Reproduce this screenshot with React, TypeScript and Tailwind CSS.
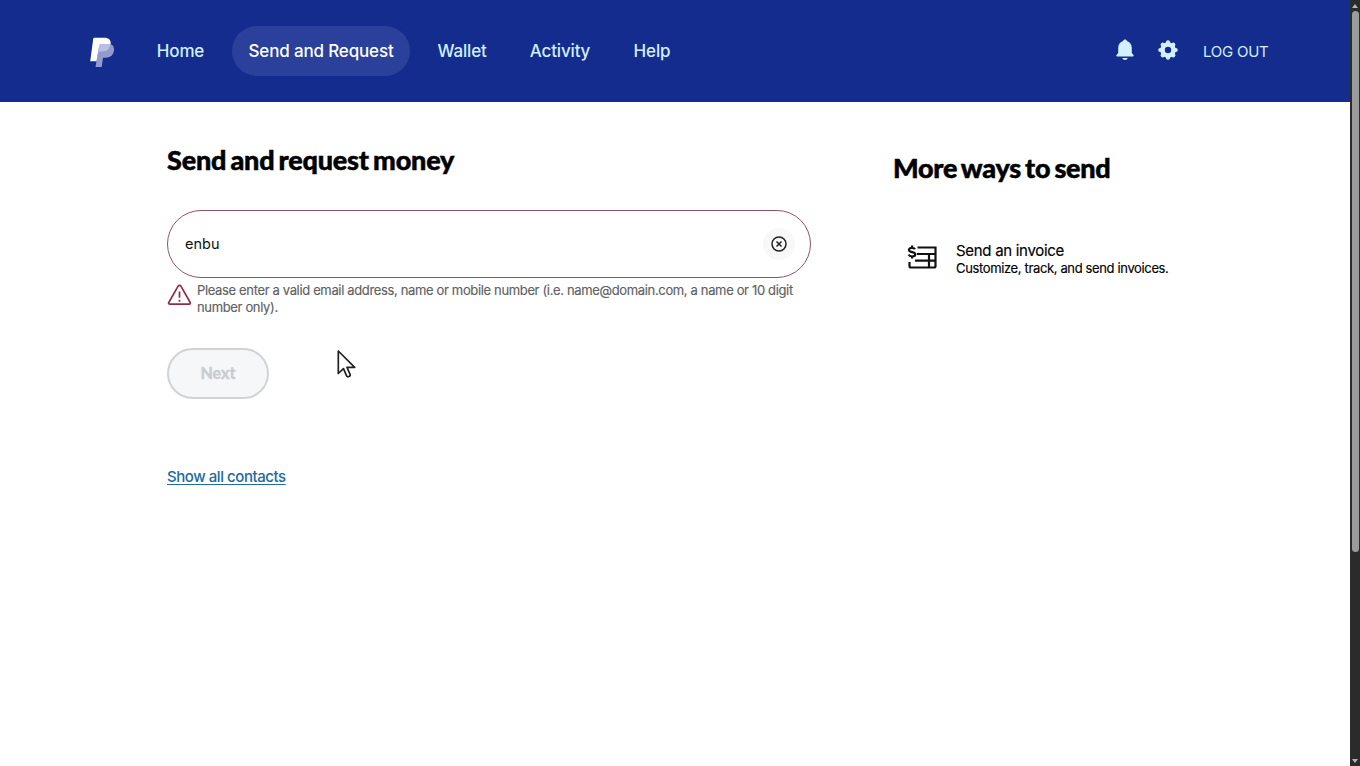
const navItems = [
  { label: "Home", className: "w-[81px]" },
  { label: "Send and Request", className: "w-[178px] bg-[#2a409b] text-white" },
  { label: "Wallet", className: "w-[82px]" },
  { label: "Activity", className: "w-[92px]" },
  { label: "Help", className: "w-[70px]" },
]

function Logo() {
  return (
    <svg className="mt-[2px] h-[31px] w-[25px]" viewBox="0 0 25 31" fill="none">
      <path d="M9.300 7h10.800c3.200 1 4.500 3.800 3.800 7.100-.9 4.600-4 6.700-8.300 6.700h-2.600L11.700 30H5.500z" fill="#929bd0" />
      <path d="M4.400.8h9.700c4.800 0 7.200 2.600 6.500 6.200H11.300c-1.200 0-1.900.7-2.100 1.800L6.500 24.200H.2L3.200 1.900C3.300 1.200 3.700.8 4.400.8z" fill="#fff" />
      <path d="M11.300 7h9.300c-.8 5.200-4 7.500-8.700 7.500H9.800c-1 0-1.500.5-1.700 1.400L9.200 8.800C9.400 7.700 10.100 7 11.300 7z" fill="#b9bfe2" />
    </svg>
  )
}

function BellIcon() {
  return (
    <svg className="h-[22px] w-[18px]" viewBox="0 0 18 22" fill="currentColor">
      <path d="M9 .5c1 0 1.800.7 1.900 1.600 3 .8 4.900 3.500 4.900 6.700v5.100l1.700 2.200c.4.600.1 1.300-.6 1.300H1.100c-.7 0-1-.7-.6-1.300l1.700-2.200V8.800c0-3.200 1.900-5.900 4.900-6.700C7.200 1.200 8 .5 9 .5z" />
      <path d="M6.300 18.900h5.400c-.3 1.300-1.300 2-2.700 2s-2.400-.7-2.700-2z" />
    </svg>
  )
}

function GearIcon() {
  return (
    <svg className="h-5 w-5" viewBox="0 0 20 20" fill="none" stroke="currentColor">
      <path d="M10 2.300v15.400M2.300 10h15.400M4.700 4.700l10.600 10.600M15.300 4.700 4.700 15.300" strokeWidth="4.200" strokeLinecap="round" />
      <circle cx="10" cy="10" r="7.800" fill="currentColor" stroke="none" />
      <circle cx="10" cy="10" r="3.200" fill="#142c8e" stroke="none" />
    </svg>
  )
}

function InvoiceIcon() {
  return (
    <svg className="h-6 w-[31px]" viewBox="0 0 31 24" fill="none" stroke="#111" strokeWidth="2.200">
      <path d="M10.500 2.500h18V21a1.500 1.500 0 0 1-1.500 1.500H4A1.500 1.500 0 0 1 2.500 21v-4M10 9h18.500M8 15.700h20.500M22 9v13.500" />
      <path d="M8 4.200C7.500 3.200 6.400 2.800 4.900 2.800 3.200 2.800 2 3.500 2 4.900c0 3 6.300 1.300 6.300 4.400 0 1.400-1.300 2.200-3.200 2.200-1.700 0-3-.6-3.500-1.800M5.100.5v2.300M5.100 11.500v2" />
    </svg>
  )
}

function Header() {
  return (
    <header className="flex h-[102px] items-center bg-[#142c8e] pl-[90px] pr-[82px] text-[#d2f0ff]">
      <Logo />
      <nav className="mb-px ml-[25px] flex gap-[11px] text-[17px] font-medium tracking-[-0.16px]">
        {navItems.map((item) => (
          <a key={item.label} href="#" className={`flex h-[50px] items-center justify-center whitespace-nowrap rounded-full pt-[2px] ${item.className}`}>
            {item.label}
          </a>
        ))}
      </nav>
      <div className="ml-auto flex items-center">
        <span className="mb-[2px]"><BellIcon /></span>
        <span className="mb-[2px] ml-6"><GearIcon /></span>
        <a href="#" className="ml-[25px] mt-[2px] w-[65px] whitespace-nowrap text-[15px] tracking-[-0.25px]">LOG OUT</a>
      </div>
    </header>
  )
}

function SendForm() {
  return (
    <section className="w-[644px] pt-[42px]">
      <h1 className="whitespace-nowrap font-[Lato] text-[27px] font-black leading-8 tracking-[-0.2px] text-black [-webkit-text-stroke:0.5px] [word-spacing:-2px]">Send and request money</h1>
      <div className="mt-[34px] flex h-[68px] items-center justify-between rounded-full border border-[#8f526a] pl-[17px] pr-[15px]">
        <span className="text-[14.500px]">enbu</span>
        <button className="flex size-8 items-center justify-center rounded-full bg-[#f8f8f8]">
          <svg className="size-4" viewBox="0 0 16 16" fill="none" stroke="#222" strokeWidth="1.500">
            <circle cx="8" cy="8" r="7" />
            <path d="m5.500 5.500 5 5m0-5-5 5" />
          </svg>
        </button>
      </div>
      <div className="mt-1 flex">
        <svg className="mt-[2px] h-[22px] w-6 shrink-0" viewBox="0 0 24 22" fill="none" stroke="#922d48" strokeWidth="1.700">
          <path d="M11.100 2.200 1.800 18.500c-.5.900 0 1.700 1 1.700h19.400c1 0 1.500-.8 1-1.700L13.900 2.200c-.7-1.200-2.100-1.200-2.800 0z" />
          <path d="M12.500 7.500v6.300M12.500 15.800v2" />
        </svg>
        <p className="ml-[6px] whitespace-nowrap text-[13px] leading-[17px] tracking-[-0.35px] text-[#606163] [-webkit-text-stroke:0.15px]">
          Please enter a valid email address, name or mobile number (i.e. name@domain.com, a name or 10 digit
          <br />
          number only).
        </p>
      </div>
      <button className="mt-8 flex h-[51px] w-[102px] items-center justify-center rounded-full border-2 border-[#d1d3d5] bg-[#f5f7f9] pb-px font-[Lato] text-base font-black text-[#c9cdd1] [-webkit-text-stroke:0.3px]">Next</button>
      <a href="#" className="mt-[68px] block w-fit whitespace-nowrap text-[15px] font-medium leading-5 tracking-[-0.44px] text-[#216a9b] underline underline-offset-2">Show all contacts</a>
    </section>
  )
}

function MoreWays() {
  return (
    <aside className="ml-[82px] pt-[50px]">
      <h2 className="whitespace-nowrap font-[Lato] text-[27px] font-black leading-8 tracking-[-0.25px] text-black [-webkit-text-stroke:0.5px] [word-spacing:-2px]">More ways to send</h2>
      <div className="ml-[13.500px] mt-[57px] flex">
        <div className="mt-[4px]"><InvoiceIcon /></div>
        <div className="ml-[18.500px] whitespace-nowrap text-black [-webkit-text-stroke:0.15px]">
          <p className="text-[15px] leading-[19px] tracking-[-0.3px]">Send an invoice</p>
          <p className="text-[13px] leading-[17px] tracking-[-0.36px]">Customize, track, and send invoices.</p>
        </div>
      </div>
    </aside>
  )
}

export default function App() {
  return (
    <div className="relative flex h-[766px] w-[1360px] overflow-hidden bg-white font-[Inter,sans-serif] text-[#101010]">
      <div className="w-[1350px]">
        <Header />
        <main className="flex pl-[167px]">
          <SendForm />
          <MoreWays />
        </main>
      </div>

      {/* Scrollbar */}
      <div className="flex w-[10px] flex-col items-center justify-between bg-[#2b2b2b]">
        <svg className="h-[11px] w-2" viewBox="0 0 8 11"><path d="M4 4 7 8H1z" fill="#b5b5b5" /></svg>
        <div className="mb-auto h-[541px] w-[7px] rounded-full bg-[#9b9b9b]" />
        <svg className="h-[11px] w-2" viewBox="0 0 8 11"><path d="m4 8 3-4H1z" fill="#b5b5b5" /></svg>
      </div>

      {/* Mouse pointer */}
      <svg className="absolute left-[337px] top-[349px] h-[31px] w-5" viewBox="0 0 20 31" fill="#fff" stroke="#222" strokeWidth="1.700" strokeLinejoin="round">
        <path d="M1.300 2v22.500l5.200-4.900 3.100 7.300c.8 1.900 4.300.4 3.500-1.500L10 18.300h7.700z" />
      </svg>
    </div>
  )
}
